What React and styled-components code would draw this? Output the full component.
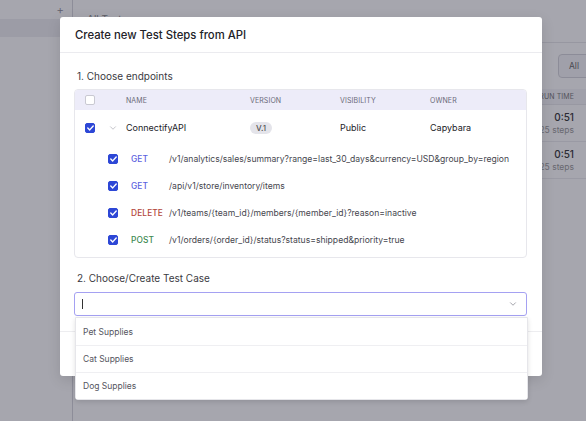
import React from "react"
import styled, { createGlobalStyle } from "styled-components"
import { ChevronDown } from "lucide-react"

const GlobalStyle = createGlobalStyle`
	html, body {
		margin: 0;
		padding: 0;
		font-family: Inter, "Noto Sans", sans-serif;
		-webkit-font-smoothing: antialiased;
	}
	* { box-sizing: border-box; }
`

const colors = {
	ink: "#222228",
	text: "#3b3b44",
	muted: "#70707a",
	line: "#e7e7ec",
	lavender: "#edecf9",
	blue: "#2d47d6",
	get: "#5b5fe0",
	del: "#b3463b",
	post: "#3e8a50",
}

const endpoints = [
	{ method: "GET", path: "/v1/analytics/sales/summary?range=last_30_days&currency=USD&group_by=region" },
	{ method: "GET", path: "/api/v1/store/inventory/items" },
	{ method: "DELETE", path: "/v1/teams/{team_id}/members/{member_id}?reason=inactive" },
	{ method: "POST", path: "/v1/orders/{order_id}/status?status=shipped&priority=true" },
]

const testCases = ["Pet Supplies", "Cat Supplies", "Dog Supplies"]

const runs = [{ time: "0:51", steps: 25 }, { time: "0:51", steps: 25 }]

/* page behind the modal */
const Page = styled.div`
	position: relative;
	display: flex;
	width: 100vw;
	height: 100vh;
	overflow: hidden;
	background: #fff;
`
const Sidebar = styled.aside`
	width: 73px;
	flex-shrink: 0;
	border-right: 1px solid #d6d6dc;
`
const SidebarTop = styled.div`
	height: 19px;
	display: flex;
	align-items: center;
	justify-content: flex-end;
	padding-right: 8px;
	color: #8a8a94;
	font-size: 12px;
	font-weight: 300;
`
const SidebarItem = styled.div`
	height: 18px;
	background: ${p => (p.$active ? "#eeeef2" : "transparent")};
`
const Main = styled.main`
	flex: 1;
	min-width: 0;
	overflow: hidden;
`
const TopBar = styled.div`
	height: 43px;
	padding: 13px 14px 0;
	border-bottom: 1px solid #e6e6ea;
	font-size: 10px;
	color: #888;
`
const Toolbar = styled.div`
	height: 46px;
	display: flex;
	align-items: center;
	justify-content: flex-end;
	margin-right: -14px;
`
const FilterButton = styled.div`
	width: 42px;
	height: 24px;
	display: flex;
	align-items: center;
	padding-left: 10px;
	border: 1px solid #d4d4da;
	border-radius: 4px;
	background: #f6f6f8;
	font-size: 8.5px;
	color: #666;
`
const RunHead = styled.div`
	height: 16px;
	display: flex;
	align-items: center;
	justify-content: flex-end;
	padding-right: 12px;
	background: #f5f5f8;
	border-bottom: 1px solid #e8e8ec;
	font-size: 7px;
	color: #777;
	text-transform: uppercase;
	letter-spacing: 0.1px;
`
const RunRow = styled.div`
	height: 37px;
	display: flex;
	flex-direction: column;
	align-items: flex-end;
	justify-content: center;
	gap: 2px;
	padding-right: 12px;
	border-bottom: 1px solid #ebebef;
`
const RunTime = styled.span`
	font-size: 10px;
	font-weight: 500;
	color: #333;
`
const RunSteps = styled.span`
	font-size: 8.5px;
	color: #999;
`

/* modal */
const Overlay = styled.div`
	position: absolute;
	inset: 0;
	padding: 17px 0 0 60px;
	background: rgba(33, 33, 52, 0.4);
`
const Modal = styled.div`
	width: 482px;
	background: #fff;
	border-radius: 3px;
	box-shadow: 0 4px 14px rgba(0, 0, 0, 0.12);
`
const ModalHeader = styled.div`
	height: 36px;
	display: flex;
	align-items: center;
	padding: 0 15px;
	border-bottom: 1px solid #ebebef;
	font-size: 11.3px;
	font-weight: 500;
	color: ${colors.ink};
`
const ModalBody = styled.div`
	padding: 16px 15px 15px 14px;
`
const SectionTitle = styled.div`
	margin: ${p => (p.$second ? "13px" : "0")} 0 ${p => (p.$second ? "7px" : "6px")} 3px;
	font-size: 10px;
	line-height: 14px;
	color: #3a3a42;
`
const EndpointTable = styled.div`
	border: 1px solid ${colors.line};
	border-radius: 4px;
	overflow: hidden;
	padding-bottom: 4px;
`
const ApiGrid = styled.div`
	display: grid;
	grid-template-columns: 23px 18px 124px 90px 90px 1fr;
	align-items: center;
	padding-left: 10px;
	height: ${p => (p.$head ? "20px" : "35px")};
	background: ${p => (p.$head ? colors.lavender : "#fff")};
`
const HeadCell = styled.span`
	font-size: 7px;
	color: #6a6a78;
	text-transform: uppercase;
	letter-spacing: 0.1px;
`
const Cell = styled.span`
	font-size: 9px;
	color: ${colors.ink};
`
const Badge = styled.span`
	justify-self: start;
	padding: 1px 6px;
	border-radius: 6px;
	background: #e4e4ea;
	font-size: 8px;
	font-weight: 500;
	color: #555;
`
const Expander = styled(ChevronDown)`
	color: #9a9aa4;
`
const EndpointRow = styled.div`
	display: grid;
	grid-template-columns: 23px 38px 1fr;
	align-items: center;
	height: 27px;
	padding-left: 33px;
`
const Method = styled.span`
	font-size: 8.4px;
	font-weight: 500;
	letter-spacing: 0.1px;
	color: ${p => colors[p.$kind]};
`
const Path = styled.span`
	font-size: 8.6px;
	color: #46464e;
	white-space: nowrap;
`
const Box = styled.span`
	width: 10px;
	height: 10px;
	display: flex;
	align-items: center;
	justify-content: center;
	border-radius: 2px;
	background: ${p => (p.$checked ? colors.blue : "#fff")};
	border: 1px solid ${p => (p.$checked ? colors.blue : "#c9c9d2")};
`
const SelectWrap = styled.div`
	position: relative;
`
const SelectBox = styled.div`
	height: 24px;
	display: flex;
	align-items: center;
	justify-content: space-between;
	padding: 0 8px 0 7px;
	border: 1px solid #a5a1f2;
	border-radius: 3px;
	color: #6c6c76;
`
const Caret = styled.span`
	width: 1px;
	height: 10px;
	background: #333;
`
const Menu = styled.div`
	position: absolute;
	top: calc(100% + 1px);
	left: 1px;
	right: -1px;
	background: #fff;
	border: 1px solid #e6e6ea;
	border-radius: 0 0 3px 3px;
	box-shadow: 0 2px 5px rgba(0, 0, 0, 0.12);
	z-index: 2;
`
const MenuItem = styled.div`
	height: 27px;
	display: flex;
	align-items: center;
	padding-left: 7px;
	background: #fff;
	font-size: 8.5px;
	color: #55555e;
	& + & {
		border-top: 1px solid #efeff2;
	}
`
const ModalFooter = styled.div`
	height: 45px;
	border-top: 1px solid #ededf0;
`

const Checkbox = ({ checked }) => (
	<Box $checked={checked}>
		{checked && (
			<svg width="7" height="6" viewBox="0 0 7 6" fill="none">
				<path d="M0.8 3.1 L2.7 4.9 L6.2 1" stroke="#fff" strokeWidth="1.4" strokeLinecap="round" strokeLinejoin="round" />
			</svg>
		)}
	</Box>
)

const kindOf = method => ({ GET: "get", DELETE: "del", POST: "post" }[method])

const App = () => {
	return (
		<>
			<GlobalStyle />
			<Page>
				<Sidebar>
					<SidebarTop>+</SidebarTop>
					<SidebarItem $active />
				</Sidebar>
				<Main>
					<TopBar>All Tests</TopBar>
					<Toolbar>
						<FilterButton>All</FilterButton>
					</Toolbar>
					<RunHead>Run time</RunHead>
					{runs.map((run, i) => (
						<RunRow key={i}>
							<RunTime>{run.time}</RunTime>
							<RunSteps>{run.steps} steps</RunSteps>
						</RunRow>
					))}
				</Main>

				<Overlay>
					<Modal>
						<ModalHeader>Create new Test Steps from API</ModalHeader>
						<ModalBody>
							<SectionTitle>1. Choose endpoints</SectionTitle>
							<EndpointTable>
								<ApiGrid $head>
									<Checkbox />
									<span />
									<HeadCell>Name</HeadCell>
									<HeadCell>Version</HeadCell>
									<HeadCell>Visibility</HeadCell>
									<HeadCell>Owner</HeadCell>
								</ApiGrid>
								<ApiGrid>
									<Checkbox checked />
									<Expander size={10} strokeWidth={1.4} />
									<Cell>ConnectifyAPI</Cell>
									<Badge>V.1</Badge>
									<Cell>Public</Cell>
									<Cell>Capybara</Cell>
								</ApiGrid>
								{endpoints.map(ep => (
									<EndpointRow key={ep.path}>
										<Checkbox checked />
										<Method $kind={kindOf(ep.method)}>{ep.method}</Method>
										<Path>{ep.path}</Path>
									</EndpointRow>
								))}
							</EndpointTable>

							<SectionTitle $second>2. Choose/Create Test Case</SectionTitle>
							<SelectWrap>
								<SelectBox>
									<Caret />
									<ChevronDown size={10} strokeWidth={1.5} />
								</SelectBox>
								<Menu>
									{testCases.map(name => (
										<MenuItem key={name}>{name}</MenuItem>
									))}
								</Menu>
							</SelectWrap>
						</ModalBody>
						<ModalFooter />
					</Modal>
				</Overlay>
			</Page>
		</>
	)
}

export default App
